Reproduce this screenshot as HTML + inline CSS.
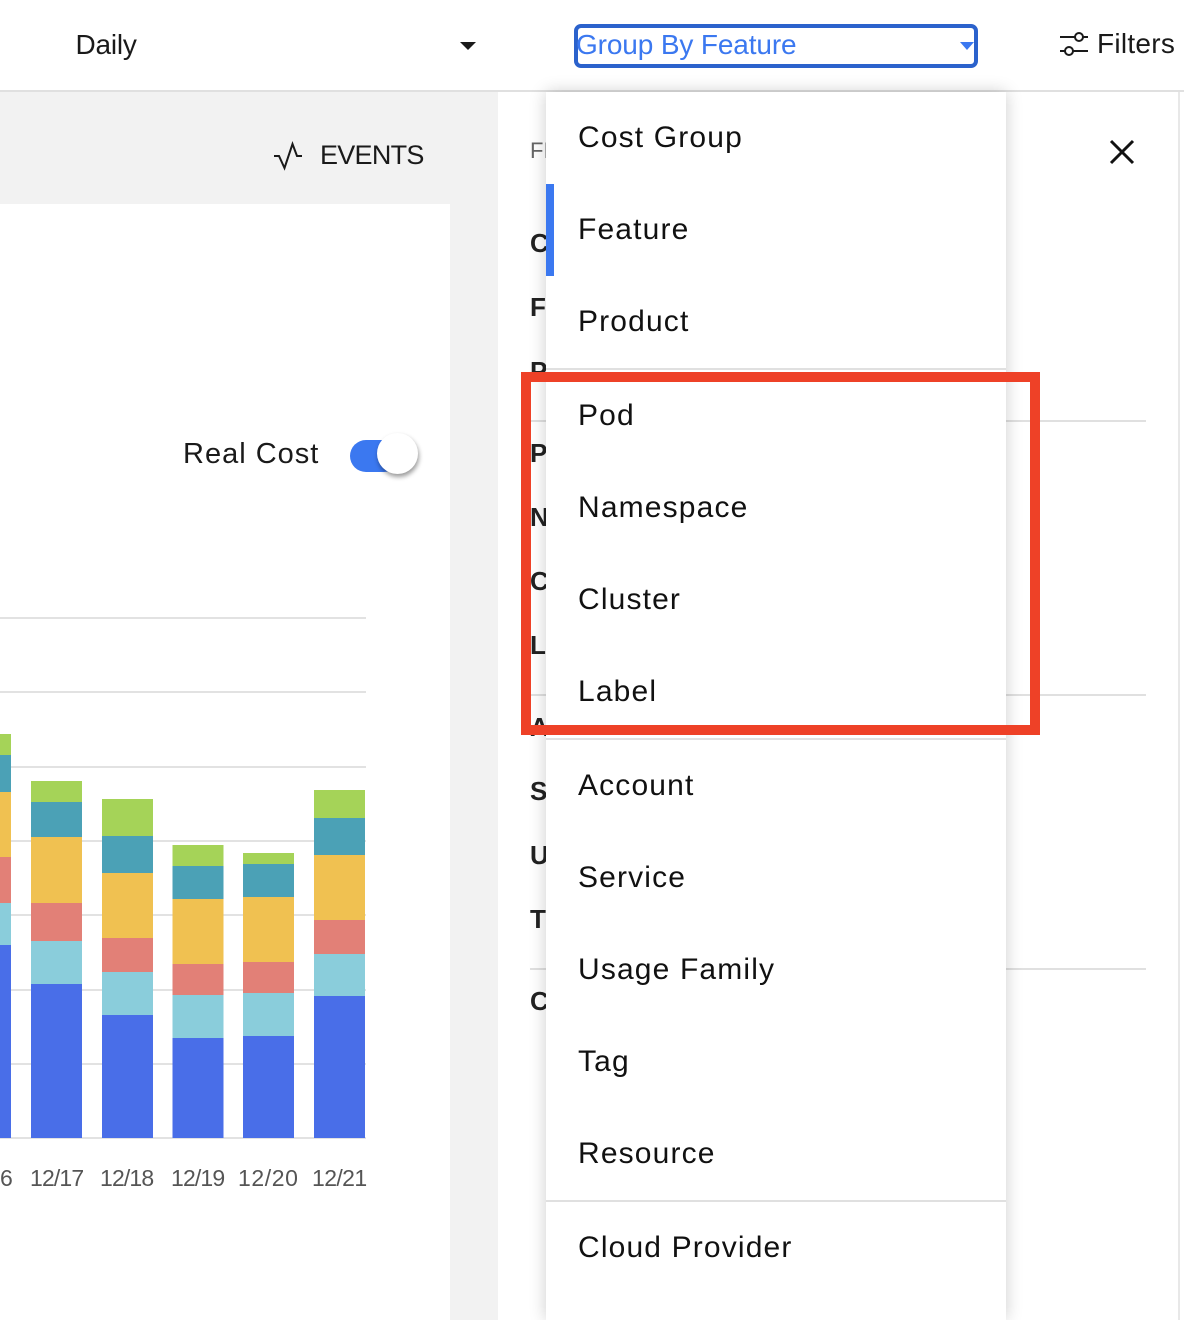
<!DOCTYPE html>
<html><head><meta charset="utf-8">
<style>
html,body{margin:0;padding:0}
body{width:1184px;height:1320px;overflow:hidden;position:relative;background:#fff;font-family:"Liberation Sans",sans-serif;color:#1a1a1a}
.a{position:absolute}
.t{position:absolute;white-space:nowrap;line-height:32px;font-size:28px}
.g{position:absolute;left:0;width:366px;height:2px;background:#e2e2e2}
.m{position:absolute;left:32px;white-space:nowrap;font-size:30px;line-height:32px;color:#111;letter-spacing:1.15px}
.h{position:absolute;left:530px;font-size:26px;font-weight:bold;line-height:30px;color:#222;white-space:nowrap}
.d{position:absolute;left:530px;width:616px;height:2px;background:#e0e0e0}
.x{position:absolute;white-space:nowrap;font-size:23px;line-height:26px;color:#555;letter-spacing:-.85px}
</style></head><body>
<div class="a" style="left:0;top:92px;width:498px;height:1228px;background:#f2f2f2"></div>
<div class="a" style="left:0;top:204px;width:450px;height:1116px;background:#fff"></div>
<div class="a" style="left:0;top:90px;width:1184px;height:2px;background:#e0e0e0"></div>
<div class="a" style="left:1178px;top:92px;width:2px;height:1228px;background:#e8e8e8"></div>

<div class="t" style="left:75.500px;top:29px;letter-spacing:-.2px">Daily</div>
<svg class="a" style="left:459px;top:41px" width="18" height="10"><path d="M1 1h16L9 9z" fill="#1a1a1a"/></svg>

<div class="a" style="left:574px;top:24px;width:404px;height:44px;box-sizing:border-box;border:4px solid #2b62cc;border-radius:7px"></div>
<div class="t" style="left:576px;top:29px;color:#3b78f0;letter-spacing:-.13px">Group By Feature</div>
<svg class="a" style="left:959px;top:41px" width="16" height="10"><path d="M1 1h14L8 9z" fill="#3b78f0"/></svg>

<svg class="a" style="left:1058px;top:28px" width="32" height="32" fill="none" stroke="#1a1a1a" stroke-width="2"><path d="M2 9h15M25 9h5M2 23h5M15 23h15"/><circle cx="21" cy="9" r="4"/><circle cx="11" cy="23" r="4"/></svg>
<div class="t" style="left:1097px;top:28px;letter-spacing:.27px">Filters</div>

<svg class="a" style="left:272px;top:140px" width="32" height="32" fill="none" stroke="#1a1a1a" stroke-width="2"><path d="M2 16h5l5.500 12 8-24 4.500 12h5"/></svg>
<div class="t" style="left:320px;top:139px;font-size:27px;letter-spacing:-.73px">EVENTS</div>

<div class="t" style="left:183px;top:438px;font-size:29px;letter-spacing:1px">Real Cost</div>
<div class="a" style="left:350px;top:440px;width:50px;height:32px;border-radius:16px;background:#3b78f0"></div>
<div class="a" style="left:377px;top:433px;width:41px;height:41px;border-radius:50%;background:#fff;box-shadow:1px 3px 5px rgba(0,0,0,.4)"></div>

<div class="g" style="top:617px"></div><div class="g" style="top:691px"></div><div class="g" style="top:766px"></div><div class="g" style="top:840px"></div><div class="g" style="top:914px"></div><div class="g" style="top:989px"></div><div class="g" style="top:1063px"></div><div class="g" style="top:1137px"></div>

<svg class="a" style="left:0;top:0" width="370" height="1140" shape-rendering="crispEdges">
<g fill="#a5d358"><rect x="0" y="734" width="11" height="21"/><rect x="31" y="781" width="51" height="21"/><rect x="102" y="799" width="51" height="37"/><rect x="172.500" y="845" width="51" height="21"/><rect x="243" y="853" width="51" height="11"/><rect x="314" y="790" width="51" height="28"/></g>
<g fill="#4ba1b6"><rect x="0" y="755" width="11" height="37"/><rect x="31" y="802" width="51" height="35"/><rect x="102" y="836" width="51" height="37"/><rect x="172.500" y="866" width="51" height="33"/><rect x="243" y="864" width="51" height="33"/><rect x="314" y="818" width="51" height="37"/></g>
<g fill="#f0c151"><rect x="0" y="792" width="11" height="65"/><rect x="31" y="837" width="51" height="66"/><rect x="102" y="873" width="51" height="65"/><rect x="172.500" y="899" width="51" height="65"/><rect x="243" y="897" width="51" height="65"/><rect x="314" y="855" width="51" height="65"/></g>
<g fill="#e28077"><rect x="0" y="857" width="11" height="46"/><rect x="31" y="903" width="51" height="38"/><rect x="102" y="938" width="51" height="34"/><rect x="172.500" y="964" width="51" height="31"/><rect x="243" y="962" width="51" height="31"/><rect x="314" y="920" width="51" height="34"/></g>
<g fill="#8acddb"><rect x="0" y="903" width="11" height="42"/><rect x="31" y="941" width="51" height="43"/><rect x="102" y="972" width="51" height="43"/><rect x="172.500" y="995" width="51" height="43"/><rect x="243" y="993" width="51" height="43"/><rect x="314" y="954" width="51" height="42"/></g>
<g fill="#496ee8"><rect x="0" y="945" width="11" height="193"/><rect x="31" y="984" width="51" height="154"/><rect x="102" y="1015" width="51" height="123"/><rect x="172.500" y="1038" width="51" height="100"/><rect x="243" y="1036" width="51" height="102"/><rect x="314" y="996" width="51" height="142"/></g>
</svg>

<div class="x" style="left:0;top:1165px">6</div>
<div class="x" style="left:30px;top:1165px">12/17</div>
<div class="x" style="left:100px;top:1165px">12/18</div>
<div class="x" style="left:171px;top:1165px">12/19</div>
<div class="x" style="left:238px;top:1165px;letter-spacing:.6px">12/20</div>
<div class="x" style="left:312px;top:1165px;letter-spacing:-.6px">12/21</div>

<div class="a" style="left:530px;top:138px;font-size:22px;line-height:26px;color:#666">FI</div>
<div class="h" style="top:228px">C</div>
<div class="h" style="top:292px">F</div>
<div class="h" style="top:356px">P</div>
<div class="d" style="top:420px"></div>
<div class="h" style="top:438px">P</div>
<div class="h" style="top:502px">N</div>
<div class="h" style="top:566px">C</div>
<div class="h" style="top:630px">L</div>
<div class="d" style="top:694px"></div>
<div class="h" style="top:712px">A</div>
<div class="h" style="top:776px">S</div>
<div class="h" style="top:840px">U</div>
<div class="h" style="top:904px">T</div>
<div class="d" style="top:968px"></div>
<div class="h" style="top:986px">C</div>

<svg class="a" style="left:1108px;top:138px" width="28" height="28" fill="none" stroke="#111" stroke-width="3"><path d="M3 3l22 22M25 3L3 25"/></svg>

<div class="a" style="left:546px;top:92px;width:460px;height:1228px;background:#fff;box-shadow:0 0 16px rgba(0,0,0,.2)">
<div class="a" style="left:0;top:92px;width:8px;height:92px;background:#3b78f0"></div>
<div class="m" style="top:30px">Cost Group</div>
<div class="m" style="top:122px">Feature</div>
<div class="m" style="top:214px">Product</div>
<div class="a" style="left:0;top:276px;width:460px;height:2px;background:#e0e0e0"></div>
<div class="m" style="top:308px">Pod</div>
<div class="m" style="top:400px">Namespace</div>
<div class="m" style="top:492px">Cluster</div>
<div class="m" style="top:584px">Label</div>
<div class="a" style="left:0;top:646px;width:460px;height:2px;background:#e0e0e0"></div>
<div class="m" style="top:678px">Account</div>
<div class="m" style="top:770px">Service</div>
<div class="m" style="top:862px">Usage Family</div>
<div class="m" style="top:954px">Tag</div>
<div class="m" style="top:1046px">Resource</div>
<div class="a" style="left:0;top:1108px;width:460px;height:2px;background:#e0e0e0"></div>
<div class="m" style="top:1140px">Cloud Provider</div>
</div>

<div class="a" style="left:521px;top:372px;width:519px;height:363px;box-sizing:border-box;border:10px solid #ee4127"></div>
</body></html>
